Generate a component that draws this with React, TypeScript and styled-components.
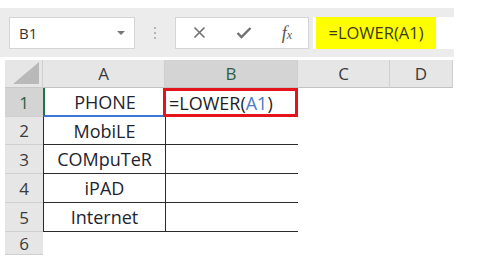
import React from 'react';
import styled, { createGlobalStyle } from 'styled-components';

const GlobalStyle = createGlobalStyle`
  html, body {
    margin: 0;
    padding: 0;
    background: #fff;
  }
  body {
    font-family: 'Open Sans', 'Liberation Sans', sans-serif;
  }
`;

const COLS = [
  { name: 'A', width: 122 },
  { name: 'B', width: 133 },
  { name: 'C', width: 92 },
  { name: 'D', width: 63 },
];

const ROWS = [
  { height: 29, a: 'PHONE' },
  { height: 28, a: 'MobiLE' },
  { height: 29, a: 'COMpuTeR' },
  { height: 29, a: 'iPAD' },
  { height: 29, a: 'Internet' },
  { height: 23, a: '' },
];

const App: React.FC = () => {
  return (
    <>
      <GlobalStyle />
      <Page>
        <Toolbar>
          <NameBox>
            <NameText>B1</NameText>
            <DropArrow />
          </NameBox>
          <Grip>
            <span />
            <span />
            <span />
          </Grip>
          <FormulaButtons>
            <svg width="13" height="13" viewBox="0 0 13 13">
              <path d="M1.5 1.5 L11.5 11.5 M11.5 1.5 L1.5 11.5" stroke="#6f6f6f" strokeWidth="1.6" />
            </svg>
            <svg width="16" height="13" viewBox="0 0 16 13">
              <path d="M1.5 7 L5.5 11 L14.5 2" stroke="#6f6f6f" strokeWidth="2.4" fill="none" />
            </svg>
            <Fx>
              f<sub>x</sub>
            </Fx>
          </FormulaButtons>
          <FormulaInput>
            <Highlight>=LOWER(A1)</Highlight>
          </FormulaInput>
        </Toolbar>

        <Sheet>
          <Corner>
            <svg width="26" height="22" viewBox="0 0 26 22">
              <polygon points="26,0 26,22 0,22" fill="#b9b9b9" />
            </svg>
          </Corner>
          {COLS.map((c) => (
            <ColHeader key={c.name} selected={c.name === 'B'}>
              {c.name}
            </ColHeader>
          ))}

          {ROWS.map((r, i) => (
            <React.Fragment key={i}>
              <RowHeader selected={i === 0}>{i + 1}</RowHeader>
              {i === 0 ? <ActiveCell>{r.a}</ActiveCell> : <DataCell boxed={i < 5}>{r.a}</DataCell>}
              {i === 0 ? (
                <FormulaCell>
                  =LOWER(<Ref>A1</Ref>)
                </FormulaCell>
              ) : (
                <DataCell boxed={i < 5} />
              )}
              <Cell />
              <Cell />
            </React.Fragment>
          ))}
        </Sheet>
      </Page>
    </>
  );
};

const Page = styled.div`
  width: 454px;
  padding-top: 8px;
`;

const Toolbar = styled.div`
  display: flex;
  align-items: center;
  height: 49px;
  background: #ececec;
  padding-left: 9px;
  box-sizing: border-box;
`;

const NameBox = styled.div`
  width: 126px;
  height: 32px;
  box-sizing: border-box;
  background: #fff;
  border: 1px solid #d4d4d4;
  display: flex;
  align-items: center;
  justify-content: space-between;
  padding: 0 9px;
`;

const NameText = styled.span`
  font-size: 15px;
  color: #333;
`;

const DropArrow = styled.span`
  width: 0;
  height: 0;
  border-left: 4px solid transparent;
  border-right: 4px solid transparent;
  border-top: 4px solid #777;
`;

const Grip = styled.div`
  width: 40px;
  display: flex;
  flex-direction: column;
  align-items: center;
  gap: 3px;

  span {
    width: 2px;
    height: 2px;
    background: #b5b5b5;
  }
`;

const FormulaButtons = styled.div`
  width: 134px;
  height: 32px;
  box-sizing: border-box;
  background: #fff;
  border: 1px solid #d4d4d4;
  display: flex;
  align-items: center;
  justify-content: space-between;
  padding: 0 16px 0 17px;
`;

const Fx = styled.span`
  font-family: 'Liberation Serif', serif;
  font-style: italic;
  font-size: 18px;
  color: #555;
  line-height: 1;

  sub {
    font-size: 12px;
    vertical-align: 0;
  }
`;

const FormulaInput = styled.div`
  flex: 1;
  margin-left: 4px;
  height: 32px;
  background: #fff;
  display: flex;
  align-items: stretch;
  padding-left: 3px;
`;

const Highlight = styled.div`
  width: 120px;
  background: #ffff00;
  display: flex;
  align-items: center;
  justify-content: center;
  font-size: 16.5px;
  color: #3b3b1a;
`;

const Sheet = styled.div`
  margin-top: 3px;
  margin-left: 5px;
  display: grid;
  grid-template-columns: 38px 122px 133px 92px 63px;
  grid-template-rows: 28px 29px 28px 29px 29px 29px 23px;
`;

const Corner = styled.div`
  background: #e6e6e6;
  border-right: 1px solid #cfcfcf;
  border-bottom: 1px solid #c8c8c8;
  box-sizing: border-box;
  display: flex;
  align-items: flex-end;
  justify-content: flex-end;
  padding: 0 3px 3px 0;
`;

const ColHeader = styled.div<{ selected?: boolean }>`
  box-sizing: border-box;
  background: ${(p) => (p.selected ? '#d4d4d4' : '#e6e6e6')};
  border-right: 1px solid #cfcfcf;
  border-bottom: 1px solid #c2c2c2;
  display: flex;
  align-items: center;
  justify-content: center;
  font-size: 17px;
  color: ${(p) => (p.selected ? '#2f5f3e' : '#3a3a3a')};
`;

const RowHeader = styled.div<{ selected?: boolean }>`
  box-sizing: border-box;
  background: ${(p) => (p.selected ? '#d4d4d4' : '#e6e6e6')};
  border-bottom: 1px solid #cfcfcf;
  display: flex;
  align-items: center;
  justify-content: center;
  font-size: 17px;
  color: ${(p) => (p.selected ? '#2f5f3e' : '#3a3a3a')};
`;

const Cell = styled.div`
  background: #fff;
`;

const DataCell = styled.div<{ boxed?: boolean }>`
  box-sizing: border-box;
  background: #fff;
  display: flex;
  align-items: center;
  justify-content: center;
  font-size: 18px;
  color: #1e2430;
  border-left: ${(p) => (p.boxed ? '1.5px solid #2a2a2a' : 'none')};
  border-bottom: ${(p) => (p.boxed ? '1.5px solid #2a2a2a' : 'none')};

  & + & {
    border-right: ${(p) => (p.boxed ? '1.5px solid #2a2a2a' : 'none')};
  }
`;

const ActiveCell = styled.div`
  box-sizing: border-box;
  background: #fff;
  display: flex;
  align-items: center;
  justify-content: center;
  font-size: 18px;
  color: #1e2430;
  border-left: 2px solid #217346;
  border-bottom: 2px solid #3c78d8;
`;

const FormulaCell = styled.div`
  box-sizing: border-box;
  margin-left: -2px;
  background: #fff;
  border: 3px solid #e3141b;
  display: flex;
  align-items: center;
  padding-left: 3px;
  font-size: 18px;
  color: #1e1e1e;
  white-space: nowrap;
`;

const Ref = styled.span`
  color: #4a7cc4;
`;

export default App;
